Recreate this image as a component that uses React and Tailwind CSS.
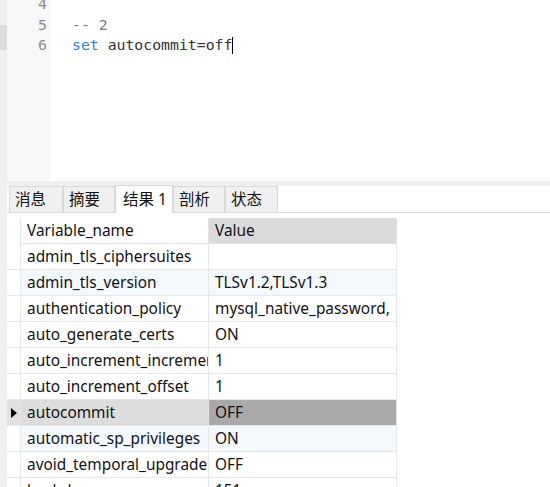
import React from 'react';

const rows = [
  ['admin_tls_ciphersuites', ''],
  ['admin_tls_version', 'TLSv1.2,TLSv1.3'],
  ['authentication_policy', 'mysql_native_password,'],
  ['auto_generate_certs', 'ON'],
  ['auto_increment_increment', '1'],
  ['auto_increment_offset', '1'],
  ['autocommit', 'OFF'],
  ['automatic_sp_privileges', 'ON'],
  ['avoid_temporal_upgrade', 'OFF'],
  ['back_log', '151'],
];

const tabs = [
  { label: '消息', w: 'w-[54px]' },
  { label: '摘要', w: 'w-[52px]' },
  { label: '结果 1', w: 'w-[58px]', active: true },
  { label: '剖析', w: 'w-[52px]' },
  { label: '状态', w: 'w-[53px]' },
];

const mono = { fontFamily: '"DejaVu Sans Mono", monospace' };
const ui = { fontFamily: '"Noto Sans", "Noto Sans CJK SC", sans-serif' };

function App() {
  return (
    <div className="w-[550px] h-[487px] overflow-hidden flex bg-white">
      {/* left strip */}
      <div className="w-[7px] shrink-0 bg-[#f0f0f0] flex flex-col">
        <div className="h-[25px]" />
        <div className="h-[25px] bg-[#dcdcdc]" />
      </div>

      <div className="flex-1 flex flex-col min-w-0">
        {/* editor */}
        <div className="h-[181px] flex shrink-0 overflow-hidden">
          <div className="w-[43px] bg-[#f7f7f7] text-[#8c8c8c] text-right pr-[3px]" style={mono}>
            <div className="-mt-[6px] text-[14.8px] leading-[20.5px]">
              <div>4</div>
              <div>5</div>
              <div>6</div>
            </div>
          </div>
          <div className="flex-1 pl-[22px]" style={mono}>
            <div className="-mt-[6px] text-[14.8px] leading-[20.5px] text-[#333]">
              <div>&nbsp;</div>
              <div className="text-[#7a7a7a]">-- 2</div>
              <div className="flex items-center">
                <span className="text-[#2b7de0]">set</span>
                <span className="whitespace-pre"> autocommit=off</span>
                <span className="inline-block w-[1px] h-[17px] bg-black" />
              </div>
            </div>
          </div>
        </div>

        <div className="h-[5px] bg-[#efefef] shrink-0" />

        {/* tabs */}
        <div className="h-[27px] flex items-end pl-[2px] border-b border-[#d9d9d9] shrink-0" style={ui}>
          {tabs.map((t) => (
            <div
              key={t.label}
              className={
                t.active
                  ? `${t.w} h-[28px] -mb-[1px] bg-white border border-b-0 border-[#d9d9d9] pl-[7px] text-[15.5px] leading-[26px] text-[#111]`
                  : `${t.w} h-[26px] bg-[#f0f0f0] border border-b-0 border-[#d9d9d9] pl-[5px] text-[15.5px] leading-[25px] text-[#111]`
              }
            >
              {t.label}
            </div>
          ))}
        </div>

        {/* grid */}
        <div className="pt-[5px] text-[15.4px] text-[#111]" style={ui}>
          <div className="grid grid-cols-[14px_188px_188px] w-max">
            <div className="h-[26px] border-r border-[#e2e2e2]" />
            <div className="h-[26px] border-r border-[#e2e2e2] px-[6px] leading-[25px] border-b">Variable_name</div>
            <div className="h-[26px] bg-[#dadada] border-r border-b border-[#e2e2e2] px-[6px] leading-[25px]">Value</div>

            {rows.map(([name, value], i) => {
              const selected = name === 'autocommit';
              const tint = i === 1 || i === 7 ? 'bg-[#f3f8fd]' : 'bg-white';
              return (
                <React.Fragment key={name}>
                  <div
                    className={`h-[26px] border-r border-b border-[#e6e6e6] flex items-center justify-center ${
                      selected ? 'bg-[#e0e0e0]' : 'bg-white'
                    }`}
                  >
                    {selected && (
                      <svg width="6" height="10" viewBox="0 0 6 10">
                        <path d="M0 0 L6 5 L0 10 Z" fill="#000" />
                      </svg>
                    )}
                  </div>
                  <div
                    className={`h-[26px] border-r border-b border-[#e6e6e6] px-[6px] leading-[25px] whitespace-nowrap overflow-hidden ${
                      selected ? 'bg-[#dcdcdc]' : tint
                    }`}
                  >
                    {name}
                  </div>
                  <div
                    className={`h-[26px] border-r border-b border-[#e6e6e6] px-[6px] leading-[25px] whitespace-nowrap overflow-hidden ${
                      selected ? 'bg-[#a9a9a9]' : tint
                    }`}
                  >
                    {value}
                  </div>
                </React.Fragment>
              );
            })}
          </div>
        </div>
      </div>
    </div>
  );
}

export default App;
